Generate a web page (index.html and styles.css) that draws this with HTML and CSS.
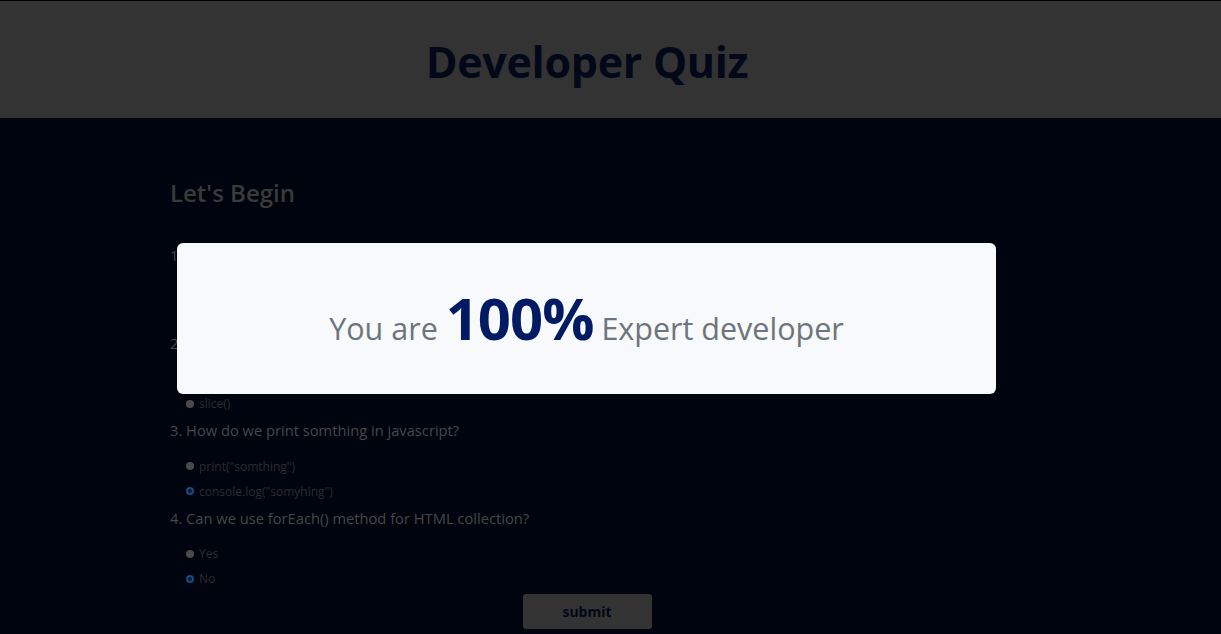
FILE: index.html
```html
<!DOCTYPE html>
<html lang="en">
<head>
<meta charset="utf-8">
<title>Developer Quiz</title>
<link rel="stylesheet" href="styles.css">
</head>
<body>
<header class="site-header">
  <h1 class="site-title">Developer Quiz</h1>
</header>
<main class="page">
  <div class="wrap">
    <form class="quiz">
      <h2 class="quiz-title">Let's Begin</h2>

      <div class="question">
        <p class="q-text">1. What is the correct syntax for referring to an external script?</p>
        <label class="opt"><span class="radio"></span>&lt;script src="xxx.js"&gt;</label>
        <label class="opt"><span class="radio checked"></span>&lt;script href="xxx.js"&gt;</label>
      </div>

      <div class="question">
        <p class="q-text">2. Which method is used to remove elements from an array?</p>
        <label class="opt"><span class="radio checked"></span>splice()</label>
        <label class="opt"><span class="radio"></span>slice()</label>
      </div>

      <div class="question">
        <p class="q-text">3. How do we print somthing in javascript?</p>
        <label class="opt"><span class="radio"></span>print("somthing")</label>
        <label class="opt"><span class="radio checked"></span>console.log("somyhing")</label>
      </div>

      <div class="question">
        <p class="q-text">4. Can we use forEach() method for HTML collection?</p>
        <label class="opt"><span class="radio"></span>Yes</label>
        <label class="opt"><span class="radio checked"></span>No</label>
      </div>

      <div class="actions">
        <button type="button" class="submit">submit</button>
      </div>
    </form>

    <div class="result">
      <p class="result-text">You are <strong class="score">100%</strong> Expert developer</p>
    </div>
  </div>
</main>
</body>
</html>
```

FILE: styles.css
```css
* { box-sizing: border-box; }

html, body {
  margin: 0;
  padding: 0;
}

body {
  background: #00040f;
  font-family: "Open Sans", "Noto Sans", sans-serif;
  height: 634px;
  overflow: hidden;
}

.site-header {
  height: 118px;
  border-top: 1px solid #000;
  background: #333333;
  display: flex;
  align-items: center;
  justify-content: center;
  padding-right: 47px;
  padding-top: 4px;
}

.site-title {
  margin: 0;
  font-size: 43px;
  font-weight: 700;
  color: #020818;
  letter-spacing: -0.3px;
  line-height: 1;
}

.page {
  background: #00040f;
}

.wrap {
  position: relative;
  width: 834px;
  margin-left: 170px;
  padding-top: 60px;
}

.quiz {
  width: 834px;
}

.quiz-title {
  margin: 0 0 38px;
  font-size: 24px;
  line-height: 29px;
  font-weight: 600;
  color: #3a3a3a;
}

.question {
  display: flex;
  flex-direction: column;
  padding-bottom: 4px;
}

.q-text {
  margin: 0 0 12px;
  font-size: 14.7px;
  line-height: 21.5px;
  color: #474747;
}

.opt {
  display: flex;
  align-items: center;
  gap: 5px;
  height: 25px;
  padding-left: 16px;
  font-size: 12px;
  color: #2c2c2c;
}

.radio {
  width: 8px;
  height: 8px;
  border-radius: 50%;
  background: #4a4a4a;
}

.radio.checked {
  background: #0a1a33;
  border: 2px solid #1c4a80;
}

.actions {
  display: flex;
  justify-content: center;
}

.submit {
  width: 129px;
  height: 35px;
  border: none;
  border-radius: 3px;
  background: #333333;
  color: #020818;
  font-family: inherit;
  font-size: 14px;
  font-weight: 700;
  margin-top: -1px;
}

.result {
  position: absolute;
  top: 125px;
  left: 7px;
  width: 819px;
  height: 151px;
  background: #f8f9fa;
  border-radius: 6px;
  display: flex;
  align-items: center;
  justify-content: center;
}

.result-text {
  margin: 0 0 2px;
  font-size: 30.5px;
  color: #6c757d;
  white-space: nowrap;
}

.score {
  font-size: 58px;
  font-weight: 700;
  color: #001b63;
  letter-spacing: -1px;
}
```
